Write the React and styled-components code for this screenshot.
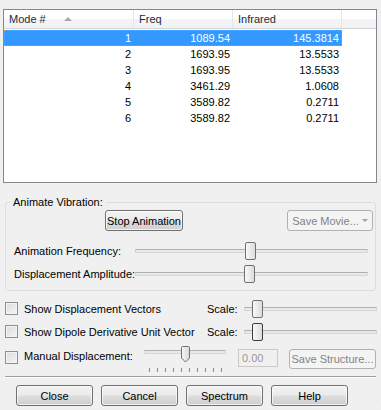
import React from 'react';
import styled, { createGlobalStyle } from 'styled-components';

const Global = createGlobalStyle`
  body {
    margin: 0;
    background: #f0f0f0;
    font-family: "Liberation Sans", Arial, sans-serif;
    font-size: 11px;
    color: #000;
  }
`

const modes = [
  { n: 1, freq: '1089.54', ir: '145.3814' },
  { n: 2, freq: '1693.95', ir: '13.5533' },
  { n: 3, freq: '1693.95', ir: '13.5533' },
  { n: 4, freq: '3461.29', ir: '1.0608' },
  { n: 5, freq: '3589.82', ir: '0.2711' },
  { n: 6, freq: '3589.82', ir: '0.2711' },
];

function Slider({ width, value, focused }) {
  return (
    <Track style={{ width }}>
      <Thumb focused={focused} style={{ left: value }} />
    </Track>
  )
}

function App() {
  return (
    <Window>
      <Global />
      <ListView>
        <Header>
          <HeadCell>Mode #<SortArrow /></HeadCell>
          <HeadCell>Freq</HeadCell>
          <HeadCell>Infrared</HeadCell>
          <HeadCell />
        </Header>
        {modes.map((m) => (
          <Row key={m.n} selected={m.n === 1}>
            <Cell>{m.n}</Cell>
            <Cell>{m.freq}</Cell>
            <Cell>{m.ir}</Cell>
          </Row>
        ))}
      </ListView>

      <Group>
        <Legend>Animate Vibration:</Legend>
        <ButtonRow>
          <Button width={78}>Stop Animation</Button>
          <DisabledButton width={86}>
            Save Movie...
            <DropArrow />
          </DisabledButton>
        </ButtonRow>
        <SliderRow gapTop={8}>
          <Label>Animation Frequency:</Label>
          <Slider width={231} value={109} />
        </SliderRow>
        <SliderRow>
          <Label>Displacement Amplitude:</Label>
          <Slider width={231} value={108} />
        </SliderRow>
      </Group>

      <OptionRow gapTop={6}>
        <CheckBox />
        <Label>Show Displacement Vectors</Label>
        <Label>Scale:</Label>
        <Slider width={131} value={7} />
      </OptionRow>
      <OptionRow>
        <CheckBox />
        <Label>Show Dipole Derivative Unit Vector</Label>
        <Label>Scale:</Label>
        <Slider width={131} value={7} focused />
      </OptionRow>
      <ManualRow>
        <CheckBox />
        <ManualLabel>Manual Displacement:</ManualLabel>
        <TickSlider>
          <Track style={{ width: 80 }}>
            <PointerThumb viewBox="0 0 9 17" width="9" height="17">
              <defs>
                <linearGradient id="pg" x1="0" y1="0" x2="1" y2="0">
                  <stop offset="0" stopColor="#f7f7f7" />
                  <stop offset="1" stopColor="#d8d8d8" />
                </linearGradient>
              </defs>
              <path d="M0.5 1.5 Q0.5 0.5 1.5 0.5 H7.5 Q8.5 0.5 8.5 1.5 V12 L4.5 16 L0.5 12 Z" fill="url(#pg)" stroke="#707070" />
            </PointerThumb>
          </Track>
          <Ticks>
            {Array.from({ length: 10 }).map((_, i) => <Tick key={i} />)}
          </Ticks>
        </TickSlider>
        <ValueBox>0.00</ValueBox>
        <DisabledButton width={87} style={{ height: 20, marginTop: 6 }}>Save Structure...</DisabledButton>
      </ManualRow>

      <Separator />

      <Footer>
        <Button width={77}>Close</Button>
        <Button width={77}>Cancel</Button>
        <Button width={77}>Spectrum</Button>
        <Button width={77}>Help</Button>
        <Grip viewBox="0 0 10 10" width="10" height="10">
          {[[8, 2], [8, 5], [5, 5], [8, 8], [5, 8], [2, 8]].map(([x, y]) => (
            <rect key={x + '-' + y} x={x} y={y} width="1.5" height="1.5" fill="#b8b8b8" />
          ))}
        </Grip>
      </Footer>
    </Window>
  )
}

export default App;

const Window = styled.div`
  width: 381px;
  height: 410px;
  box-sizing: border-box;
  padding: 9px 4px 0 3px;
  display: flex;
  flex-direction: column;
  overflow: hidden;
`

const ListView = styled.div`
  height: 174px;
  flex-shrink: 0;
  box-sizing: border-box;
  border: 1px solid #828790;
  background: #fff;
`

const Header = styled.div`
  display: grid;
  grid-template-columns: 130px 99px 109px 1fr;
  height: 19px;
  box-sizing: border-box;
  border-bottom: 1px solid #d5d5d5;
  background: linear-gradient(#ffffff 0%, #ffffff 50%, #f3f4f6 51%, #f1f2f4 100%);
`

const HeadCell = styled.div`
  display: flex;
  align-items: center;
  padding-left: 5px;
  border-right: 1px solid #e3e5e7;
  color: #1e2a3b;
  &:last-child { border-right: none; }
`

const SortArrow = styled.span`
  margin-left: 18px;
  width: 0;
  height: 0;
  border-left: 4px solid transparent;
  border-right: 4px solid transparent;
  border-bottom: 4px solid #a7abb0;
`

const Row = styled.div`
  display: grid;
  grid-template-columns: 130px 99px 109px;
  width: 338px;
  height: 16px;
  box-sizing: border-box;
  align-items: center;
  background: ${(p) => (p.selected ? '#3399ff' : 'transparent')};
  color: ${(p) => (p.selected ? '#fff' : '#000')};
  outline: ${(p) => (p.selected ? '1px dotted #e08a3c' : 'none')};
  outline-offset: -1px;
  margin-top: ${(p) => (p.selected ? '1px' : '0')};
`

const Cell = styled.div`
  text-align: right;
  padding-right: 3px;
  white-space: nowrap;
`

const Label = styled.span`
  white-space: nowrap;
`

const Group = styled.fieldset`
  flex-shrink: 0;
  margin: 12px 1px 0 2px;
  padding: 0 0 5px 0;
  min-width: 0;
  border: 1px solid #d5dfe5;
  border-radius: 3px;
`

const Legend = styled.legend`
  margin-left: 4px;
  padding: 0 3px;
  line-height: 14px;
`

const ButtonRow = styled.div`
  display: flex;
  align-items: center;
  padding: 1px 2px 0 99px;
  justify-content: space-between;
`

const Button = styled.button`
  width: ${(p) => p.width}px;
  height: 21px;
  flex-shrink: 0;
  padding: 0;
  font: inherit;
  color: #000;
  border: 1px solid #707070;
  border-radius: 3px;
  background: linear-gradient(#f2f2f2 0%, #ebebeb 48%, #dddddd 52%, #cfcfcf 100%);
  box-shadow: inset 0 0 0 1px rgba(255, 255, 255, 0.7);
`

const DisabledButton = styled(Button)`
  color: #838383;
  border-color: #adb2b5;
  background: #f4f4f4;
  box-shadow: none;
  display: flex;
  align-items: center;
  justify-content: center;
  gap: 3px;
`

const DropArrow = styled.span`
  width: 0;
  height: 0;
  border-left: 3px solid transparent;
  border-right: 3px solid transparent;
  border-top: 3px solid #a0a0a0;
`

const SliderRow = styled.div`
  display: grid;
  grid-template-columns: 121px 233px;
  align-items: center;
  height: 23px;
  padding-left: 8px;
  margin-top: ${(p) => p.gapTop || 0}px;
`

const Track = styled.div`
  position: relative;
  height: 2px;
  border: 1px solid #d6d6d6;
  border-top-color: #b0b0b0;
  background: #e7eaea;
  box-sizing: content-box;
`

const Thumb = styled.div`
  position: absolute;
  top: -8px;
  width: 9px;
  height: 16px;
  border: 1px solid ${(p) => (p.focused ? '#3c3c3c' : '#707070')};
  border-radius: 2px;
  background: linear-gradient(90deg, #f8f8f8, #dcdcdc);
`

const PointerThumb = styled.svg`
  position: absolute;
  top: -5px;
  left: 36px;
`

const OptionRow = styled.div`
  display: grid;
  grid-template-columns: 19px 183px 37px 133px;
  align-items: center;
  height: 23px;
  flex-shrink: 0;
  padding-left: 2px;
  margin-top: ${(p) => p.gapTop || 0}px;
`

const CheckBox = styled.div`
  width: 11px;
  height: 11px;
  border: 1px solid #8e8f8f;
  background: linear-gradient(135deg, #dcdcdc, #f4f4f4);
  box-shadow: inset 0 0 0 1px #f4f4f4;
`

const ManualRow = styled.div`
  display: grid;
  grid-template-columns: 19px 120px 94px 51px 87px;
  align-items: start;
  height: 33px;
  flex-shrink: 0;
  padding-left: 2px;
  box-sizing: border-box;
  & > ${CheckBox} { margin-top: 8px; }
`

const ManualLabel = styled(Label)`
  margin-top: 7px;
`

const TickSlider = styled.div`
  width: 82px;
  padding-top: 7px;
`

const Ticks = styled.div`
  display: flex;
  justify-content: space-between;
  padding: 14px 4px 0 5px;
`

const Tick = styled.span`
  width: 1px;
  height: 4px;
  background: #8a8a8a;
`

const ValueBox = styled.div`
  width: 40px;
  height: 18px;
  margin-top: 6px;
  box-sizing: border-box;
  border: 1px solid #c9c9c9;
  background: #f0f0f0;
  color: #9a9a9a;
  padding: 2px 0 0 3px;
`

const Separator = styled.div`
  height: 0;
  flex-shrink: 0;
  margin: 0 1px 0 2px;
  border-top: 1px solid #a0a0a0;
  border-bottom: 1px solid #fff;
`

const Footer = styled.div`
  display: flex;
  align-items: flex-end;
  gap: 8px;
  padding: 7px 0 0 13px;
`

const Grip = styled.svg`
  margin-left: 19px;
  margin-bottom: 1px;
`
